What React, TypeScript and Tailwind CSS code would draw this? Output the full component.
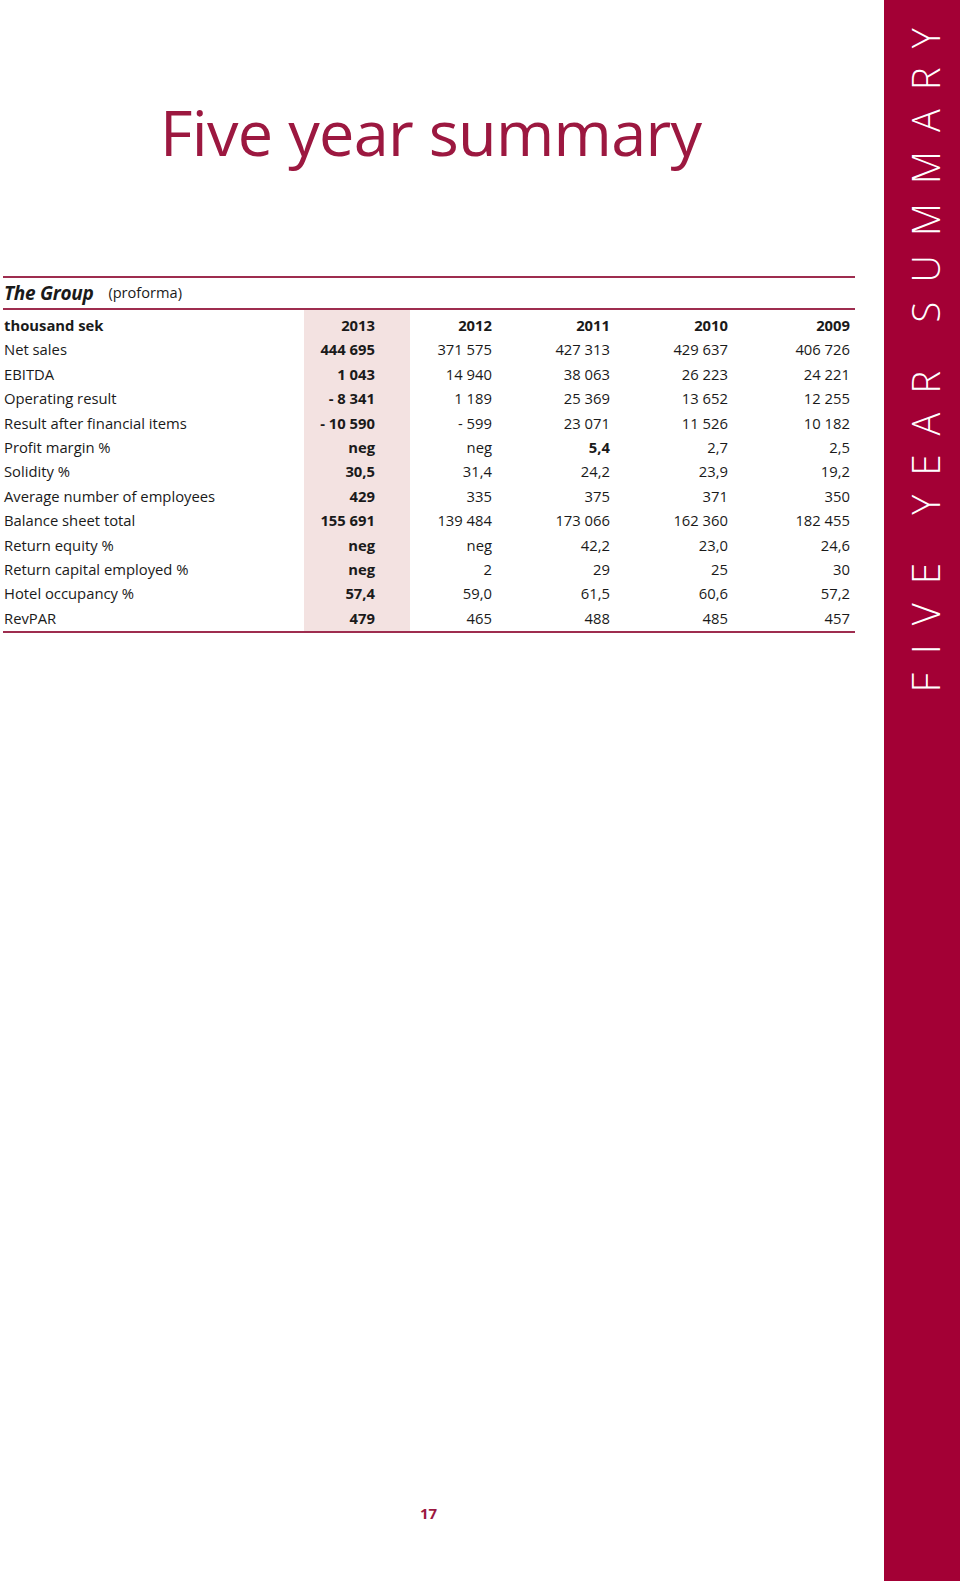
import React from "react";

type Row = { label: string; v: string[]; bold?: boolean; boldIdx?: number[] };

const rows: Row[] = [
  { label: "thousand sek", v: ["2013", "2012", "2011", "2010", "2009"], bold: true },
  { label: "Net sales", v: ["444 695", "371 575", "427 313", "429 637", "406 726"] },
  { label: "EBITDA", v: ["1 043", "14 940", "38 063", "26 223", "24 221"] },
  { label: "Operating result", v: ["- 8 341", "1 189", "25 369", "13 652", "12 255"] },
  { label: "Result after financial items", v: ["- 10 590", "- 599", "23 071", "11 526", "10 182"] },
  { label: "Profit margin %", v: ["neg", "neg", "5,4", "2,7", "2,5"], boldIdx: [2] },
  { label: "Solidity %", v: ["30,5", "31,4", "24,2", "23,9", "19,2"] },
  { label: "Average number of employees", v: ["429", "335", "375", "371", "350"] },
  { label: "Balance sheet total", v: ["155 691", "139 484", "173 066", "162 360", "182 455"] },
  { label: "Return equity %", v: ["neg", "neg", "42,2", "23,0", "24,6"] },
  { label: "Return capital employed %", v: ["neg", "2", "29", "25", "30"] },
  { label: "Hotel occupancy %", v: ["57,4", "59,0", "61,5", "60,6", "57,2"] },
  { label: "RevPAR", v: ["479", "465", "488", "485", "457"] },
];

export default function App() {
  return (
    <div
      className="flex w-[960px] h-[1581px] bg-white text-[#1a1a1a]"
      style={{ fontFamily: '"Open Sans", "Noto Sans", sans-serif' }}
    >
      <main className="flex flex-col w-[884px] h-full">
        <h1 className="mt-[100px] pl-[160px] text-[63px] leading-[63px] text-[#9c1840] font-normal tracking-[-0.7px]">
          Five year summary
        </h1>

        <section className="mt-[113px] ml-[3px] w-[852px]">
          <div className="h-[2px] bg-[#9e2d4f]" />
          <div className="flex items-center h-[30px] pl-[1px]">
            <span className="font-bold italic text-[19px] tracking-[-0.3px]">The Group</span>
            <span className="ml-[15px] text-[14.6px]">(proforma)</span>
          </div>
          <div className="h-[2px] bg-[#9e2d4f]" />
          <div className="grid grid-cols-[301px_106px_82px_118px_118px_122px] pr-[5px]">
            <div className="flex flex-col pt-[3px] pb-[1px]">
              {rows.map((r) => (
                <div
                  key={r.label}
                  className={`h-[24.4px] flex items-center pl-[1px] text-[14.8px] whitespace-nowrap ${r.bold ? "font-bold" : ""}`}
                >
                  {r.label}
                </div>
              ))}
            </div>
            {[0, 1, 2, 3, 4].map((ci) => (
              <div
                key={ci}
                className={`flex flex-col pt-[3px] pb-[1px] ${ci === 0 ? "bg-[#f3e2e1] pr-[35px]" : ""}`}
              >
                {rows.map((r) => {
                  const isBold = r.bold || ci === 0 || (r.boldIdx && r.boldIdx.includes(ci));
                  return (
                    <div
                      key={r.label}
                      className={`h-[24.4px] flex items-center justify-end text-[14.8px] whitespace-nowrap ${isBold ? "font-bold" : ""}`}
                    >
                      {r.v[ci]}
                    </div>
                  );
                })}
              </div>
            ))}
          </div>
          <div className="h-[2px] bg-[#9e2d4f]" />
        </section>

        <div className="mt-auto pb-[58px] pl-[420px] text-[15px] leading-[20px] font-bold text-[#9c1840]">
          17
        </div>
      </main>

      <aside className="w-[76px] h-full bg-[#a30035] flex justify-start pl-[22px] pt-[9px]">
        <div className="[writing-mode:vertical-rl] rotate-180 text-white text-[38px] leading-[38px] font-[350] tracking-[19.2px] whitespace-nowrap h-fit">
          FIVE YEAR SUMMARY
        </div>
      </aside>
    </div>
  );
}
